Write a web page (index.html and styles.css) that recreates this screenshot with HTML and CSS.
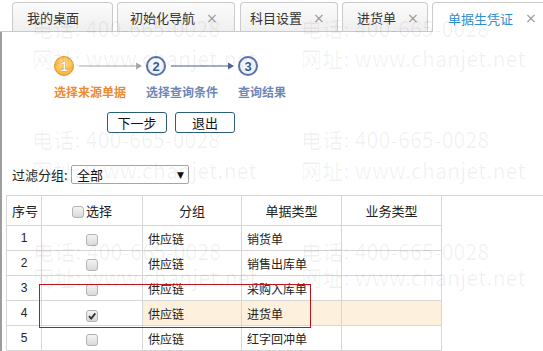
FILE: index.html
```html
<!DOCTYPE html>
<html lang="zh">
<head>
<meta charset="utf-8">
<link rel="stylesheet" href="styles.css">
</head>
<body>
<div class="page">
  <div class="tabs">
    <div class="tab w1">我的桌面</div>
    <div class="tab w2">初始化导航<span class="x">×</span></div>
    <div class="tab w3">科目设置<span class="x">×</span></div>
    <div class="tab w4">进货单<span class="x">×</span></div>
    <div class="tab w5 active">单据生凭证<span class="x">×</span></div>
  </div>
  <div class="content">
    <div class="steps">
      <span class="circle done">1</span>
      <svg class="arrow" width="63" height="10" viewBox="0 0 63 10"><line x1="0" y1="5" x2="58" y2="5" stroke="#a9a9a9" stroke-width="1"/><polygon points="57,1.5 63,5 57,8.5" fill="#a9a9a9"/></svg>
      <span class="circle todo">2</span>
      <svg class="arrow" width="63" height="10" viewBox="0 0 63 10"><line x1="0" y1="5" x2="58" y2="5" stroke="#4d6390" stroke-width="1"/><polygon points="57,1.5 63,5 57,8.5" fill="#4d6390"/></svg>
      <span class="circle todo">3</span>
    </div>
    <div class="labels">
      <span class="lbl cur">选择来源单据</span>
      <span class="lbl">选择查询条件</span>
      <span class="lbl">查询结果</span>
    </div>
    <div class="buttons">
      <button class="btn">下一步</button>
      <button class="btn">退出</button>
    </div>
    <div class="filter">
      <span class="flabel">过滤分组:</span>
      <div class="select"><span>全部</span><span class="caret">▼</span></div>
    </div>
    <div class="gridwrap">
      <table class="grid">
        <thead>
          <tr><th class="c1">序号</th><th class="c2"><span class="cb"></span>选择</th><th class="c3">分组</th><th class="c4">单据类型</th><th class="c5">业务类型</th></tr>
        </thead>
        <tbody>
          <tr><td class="num">1</td><td class="chk"><span class="cb"></span></td><td>供应链</td><td>销货单</td><td></td></tr>
          <tr><td class="num">2</td><td class="chk"><span class="cb"></span></td><td>供应链</td><td>销售出库单</td><td></td></tr>
          <tr><td class="num">3</td><td class="chk"><span class="cb"></span></td><td>供应链</td><td>采购入库单</td><td></td></tr>
          <tr class="sel"><td class="num">4</td><td class="chk"><span class="cb on"><svg width="10" height="10" viewBox="0 0 10 10"><path d="M2 5.2 L4.2 7.6 L8.3 2.4" fill="none" stroke="#333" stroke-width="1.8"/></svg></span></td><td class="hl">供应链</td><td class="hl">进货单</td><td class="hl"></td></tr>
          <tr><td class="num">5</td><td class="chk"><span class="cb"></span></td><td>供应链</td><td>红字回冲单</td><td></td></tr>
        </tbody>
      </table>
    </div>
  </div>
  <div class="wm">
    <span class="wmt a1">电话: 400-665-0028</span>
    <span class="wmt a2">电话: 400-665-0028</span>
    <span class="wmt b1">网址: www.chanjet.net</span>
    <span class="wmt b2">网址: www.chanjet.net</span>
    <span class="wmt c1x">电话: 400-665-0028</span>
    <span class="wmt c2x">电话: 400-665-0028</span>
    <span class="wmt d1">网址: www.chanjet.net</span>
    <span class="wmt d2">网址: www.chanjet.net</span>
    <span class="wmt e1">电话: 400-665-0028</span>
    <span class="wmt e2">电话: 400-665-0028</span>
    <span class="wmt f1">网址: www.chanjet.net</span>
    <span class="wmt f2">网址: www.chanjet.net</span>
  </div>
  <div class="mark"></div>
</div>
</body>
</html>
```
FILE: styles.css
```css
* { box-sizing: border-box; }
html, body { margin: 0; padding: 0; background: #fff; }
body { width: 543px; height: 351px; overflow: hidden; font-family: "Noto Sans CJK SC", "Liberation Sans", sans-serif; color: #222; }
.page { position: relative; width: 543px; height: 351px; overflow: hidden; }

.tabs { display: flex; align-items: flex-end; height: 32px; padding-left: 12px; border-bottom: 1px solid #c9c9c9; }
.tab { height: 29px; margin-right: 4px; display: flex; align-items: center; justify-content: flex-start; gap: 11px; font-size: 13px; color: #333; border: 1px solid #cbcbcb; border-bottom: none; border-radius: 4px 4px 0 0; background: linear-gradient(#fbfbfb, #efefef); flex: none; padding-top: 1px; }
.tab .x { color: #999; font-size: 14px; font-family: "DejaVu Sans", sans-serif; }
.w1 { width: 101px; padding-left: 14px; }
.w2 { width: 118px; margin-right: 5px; padding-left: 12px; }
.w3 { width: 98px; padding-left: 9px; }
.w4 { width: 86px; padding-left: 14px; }
.w5 { width: 130px; padding-left: 15px; gap: 12px; }
.tab.active { background: #fff; height: 30px; margin-bottom: -1px; color: #2f8fd1; }

.content { border-left: 2px solid #9d9d9d; height: 319px; }

.steps { display: flex; align-items: center; padding-left: 52px; padding-top: 24px; height: 44px; }
.circle { width: 20px; height: 20px; border-radius: 50%; display: flex; align-items: center; justify-content: center; font-family: "Liberation Sans", sans-serif; font-weight: bold; font-size: 13px; flex: none; }
.circle.done { background: radial-gradient(circle at 50% 40%, #ffe6a6 0%, #f9c04b 55%, #eea12b 100%); border: 1.5px solid #e19634; color: #fff; text-shadow: 0 0 1px #d07d10, 0 0 1px #d07d10; }
.circle.todo { background: radial-gradient(circle at 50% 40%, #ffffff 0%, #eef3fb 60%, #d7e1f1 100%); border: 2px solid #5873a6; color: #3c5a93; }
.arrow { display: block; margin: 0 4px 0 5px; flex: none; }

.labels { display: grid; grid-template-columns: 92px 92px 92px; padding-left: 52px; margin-top: 9px; height: 14px; }
.lbl { font-size: 12px; font-weight: bold; line-height: 14px; color: #6f87b5; white-space: nowrap; }
.lbl.cur { color: #ec8a2f; }

.buttons { display: flex; gap: 8px; padding-left: 105px; margin-top: 13px; }
.btn { width: 60px; height: 21px; padding: 0; border: 1px solid #2b5f78; border-radius: 3px; background: #fff; font-family: "Noto Sans CJK SC", sans-serif; font-size: 13px; color: #111; line-height: 19px; }

.filter { display: flex; align-items: center; padding-left: 10px; margin-top: 32px; height: 19px; }
.flabel { font-size: 13px; color: #222; width: 59px; }
.select { width: 118px; height: 19px; border: 1px solid #a5a5a5; border-radius: 2px; display: flex; align-items: center; justify-content: space-between; padding: 0 4px 0 5px; font-size: 13px; color: #111; }
.caret { font-size: 9px; color: #111; font-family: "DejaVu Sans", sans-serif; }

.gridwrap { margin-top: 11px; margin-left: 4px; border-top: 1px solid #d6d6d6; }
.grid { border-collapse: collapse; table-layout: fixed; width: 435px; margin-top: -1px; }
.grid th, .grid td { border: 1px solid #d6d6d6; padding: 0 5px; font-size: 12px; white-space: nowrap; overflow: hidden; }
.grid th { height: 30px; font-weight: normal; font-size: 13px; color: #222; text-align: center; }
.grid td { height: 25px; color: #222; text-align: left; }
.grid .c1 { width: 35px; }
.grid .c2 { width: 101px; }
.grid .c3 { width: 99px; }
.grid .c4 { width: 100px; }
.grid .c5 { width: 100px; }
.grid td.num { text-align: center; font-family: "Liberation Sans", sans-serif; font-size: 12px; }
.grid td.chk { text-align: center; }
.grid td.hl { background: #fdf0dc; }
.cb { display: inline-flex; align-items: center; justify-content: center; width: 12px; height: 12px; border: 1px solid #b3b3b3; border-radius: 3px; background: linear-gradient(#f4f4f4, #d9d9d9); vertical-align: -2px; }
th .cb { margin-right: 2px; }

.wm { position: absolute; inset: 0; pointer-events: none; }
.wmt { position: absolute; font-family: "Noto Sans CJK SC", sans-serif; font-size: 21px; line-height: 24px; color: rgba(0,0,0,0.06); white-space: nowrap; letter-spacing: 0.3px; }
.a1 { left: 32px; top: 16px; }
.a2 { left: 301px; top: 16px; }
.b1 { left: 32px; top: 46px; }
.b2 { left: 301px; top: 46px; }
.c1x { left: 32px; top: 127px; }
.c2x { left: 301px; top: 127px; }
.d1 { left: 32px; top: 158px; }
.d2 { left: 301px; top: 158px; }
.e1 { left: 33px; top: 239px; }
.e2 { left: 301px; top: 239px; }
.f1 { left: 33px; top: 265px; }
.f2 { left: 301px; top: 265px; }

.mark { position: absolute; left: 39px; top: 284px; width: 272px; height: 44px; border: 1px solid #c0131b; pointer-events: none; }
```
